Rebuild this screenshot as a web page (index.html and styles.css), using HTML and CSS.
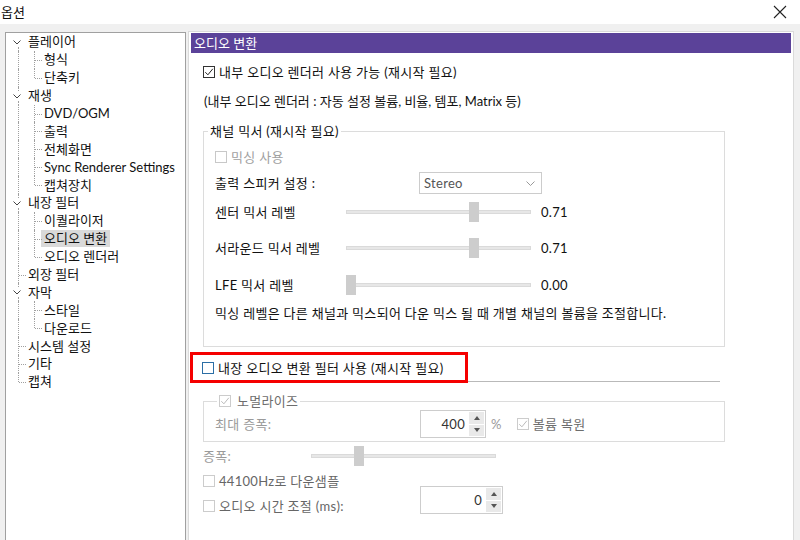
FILE: index.html
```
<!DOCTYPE html>
<html lang="ko">
<head>
<meta charset="utf-8">
<title>옵션</title>
<link rel="stylesheet" href="styles.css">
</head>
<body>

<header class="titlebar">
	<h1>옵션</h1>
	<svg class="close" width="14" height="14" viewBox="0 0 14 14"><path d="M1 1 13 13M13 1 1 13" stroke="#222" stroke-width="1.1" fill="none"/></svg>
</header>

<div class="main">

	<!-- left tree -->
	<nav class="tree">
		<div class="node"><span class="g e first"><svg width="8" height="5" viewBox="0 0 8 5"><path d="M0.5 0.5 4 4 7.5 0.5" fill="none" stroke="#444"/></svg></span><span class="txt">플레이어</span></div>
		<div class="node"><span class="g v"></span><span class="g t"></span><span class="txt">형식</span></div>
		<div class="node"><span class="g v"></span><span class="g l"></span><span class="txt">단축키</span></div>
		<div class="node"><span class="g e"><svg width="8" height="5" viewBox="0 0 8 5"><path d="M0.5 0.5 4 4 7.5 0.5" fill="none" stroke="#444"/></svg></span><span class="txt">재생</span></div>
		<div class="node"><span class="g v"></span><span class="g t"></span><span class="txt">DVD/OGM</span></div>
		<div class="node"><span class="g v"></span><span class="g t"></span><span class="txt">출력</span></div>
		<div class="node"><span class="g v"></span><span class="g t"></span><span class="txt">전체화면</span></div>
		<div class="node"><span class="g v"></span><span class="g t"></span><span class="txt">Sync Renderer Settings</span></div>
		<div class="node"><span class="g v"></span><span class="g l"></span><span class="txt">캡쳐장치</span></div>
		<div class="node"><span class="g e"><svg width="8" height="5" viewBox="0 0 8 5"><path d="M0.5 0.5 4 4 7.5 0.5" fill="none" stroke="#444"/></svg></span><span class="txt">내장 필터</span></div>
		<div class="node"><span class="g v"></span><span class="g t"></span><span class="txt">이퀄라이저</span></div>
		<div class="node"><span class="g v"></span><span class="g t"></span><span class="txt selected">오디오 변환</span></div>
		<div class="node"><span class="g v"></span><span class="g l"></span><span class="txt">오디오 렌더러</span></div>
		<div class="node"><span class="g t"></span><span class="txt">외장 필터</span></div>
		<div class="node"><span class="g e"><svg width="8" height="5" viewBox="0 0 8 5"><path d="M0.5 0.5 4 4 7.5 0.5" fill="none" stroke="#444"/></svg></span><span class="txt">자막</span></div>
		<div class="node"><span class="g v"></span><span class="g t"></span><span class="txt">스타일</span></div>
		<div class="node"><span class="g v"></span><span class="g l"></span><span class="txt">다운로드</span></div>
		<div class="node"><span class="g t"></span><span class="txt">시스템 설정</span></div>
		<div class="node"><span class="g t"></span><span class="txt">기타</span></div>
		<div class="node"><span class="g l"></span><span class="txt">캡쳐</span></div>
	</nav>

	<!-- settings page -->
	<section class="panel">
		<div class="panel-head">오디오 변환</div>
		<div class="panel-body">

			<div class="check-row"><span class="chk"><svg width="10" height="10" viewBox="0 0 10 10"><path d="M1.3 5.2 3.9 7.8 8.8 1.8" fill="none" stroke="#222"/></svg></span>내부 오디오 렌더러 사용 가능 (재시작 필요)</div>
			<p class="note">(내부 오디오 렌더러 : 자동 설정 볼륨, 비율, 템포, Matrix 등)</p>

			<fieldset class="group mixer">
				<legend>채널 믹서 (재시작 필요)</legend>
				<div class="check-row off mix-use"><span class="chk"></span>믹싱 사용</div>
				<div class="field speaker">
					<span class="lbl">출력 스피커 설정 :</span>
					<div class="combo">Stereo<svg width="9" height="5" viewBox="0 0 9 5"><path d="M0.5 0.5 4.5 4.5 8.5 0.5" fill="none" stroke="#999"/></svg></div>
				</div>
				<div class="field level center">
					<span class="lbl">센터 믹서 레벨</span>
					<div class="slider"><span class="track"></span><span class="thumb" style="left:123px"></span></div>
					<span class="val">0.71</span>
				</div>
				<div class="field level surround">
					<span class="lbl">서라운드 믹서 레벨</span>
					<div class="slider"><span class="track"></span><span class="thumb" style="left:123px"></span></div>
					<span class="val">0.71</span>
				</div>
				<div class="field level lfe">
					<span class="lbl">LFE 믹서 레벨</span>
					<div class="slider"><span class="track"></span><span class="thumb" style="left:0px"></span></div>
					<span class="val">0.00</span>
				</div>
				<p class="hint">믹싱 레벨은 다른 채널과 믹스되어 다운 믹스 될 때 개별 채널의 볼륨을 조절합니다.</p>
			</fieldset>

			<div class="filter-row">
				<div class="mark"><span class="chk focus"></span>내장 오디오 변환 필터 사용 (재시작 필요)</div>
				<span class="sep"></span>
			</div>

			<fieldset class="group norm">
				<legend><span class="chk"><svg width="10" height="10" viewBox="0 0 10 10"><path d="M1.3 5.2 3.9 7.8 8.8 1.8" fill="none" stroke="#bbb"/></svg></span>노멀라이즈</legend>
				<div class="field gain-max">
					<span class="lbl">최대 증폭:</span>
					<div class="spin w66"><span class="num">400</span><span class="btns"><span class="up"></span><span class="dn"></span></span></div>
					<span class="pct">%</span>
					<span class="restore"><span class="chk"><svg width="10" height="10" viewBox="0 0 10 10"><path d="M1.3 5.2 3.9 7.8 8.8 1.8" fill="none" stroke="#bbb"/></svg></span>볼륨 복원</span>
				</div>
			</fieldset>

			<div class="field gain">
				<span class="lbl">증폭:</span>
				<div class="slider"><span class="track"></span><span class="thumb" style="left:43px"></span></div>
			</div>
			<div class="check-row off2 down">
				<span class="chk"></span>44100Hz로 다운샘플
			</div>
			<div class="field delay">
				<span class="lbl"><span class="chk"></span>오디오 시간 조절 (ms):</span>
				<div class="spin w83"><span class="num">0</span><span class="btns"><span class="up"></span><span class="dn"></span></span></div>
			</div>

		</div>
	</section>
</div>

</body>
</html>
```

FILE: styles.css
```
* {
	box-sizing : border-box ;
	}
body {
	margin : 0 ;
	width : 800px ;
	height : 540px ;
	overflow : hidden ;
	background : #f0f0f0 ;
	font-family : Lato, "Noto Sans CJK KR", sans-serif ;
	font-size : 13px ;
	line-height : 18px ;
	color : #111 ;
	}

/* title bar */
.titlebar {
	height : 24px ;
	background : #fff ;
	display : flex ;
	align-items : center ;
	justify-content : space-between ;
	padding : 0 13px 0 1px ;
	}
.titlebar h1 {
	margin : 0 ;
	font-size : 13px ;
	font-weight : normal ;
	}

.main {
	display : flex ;
	gap : 2px ;
	padding : 7px 6px 0 5px ;
	height : 516px ;
	}

/* tree */
.tree {
	width : 181px ;
	margin-top : 1px ;
	background : #fff ;
	border : 1px solid #a0a0a0 ;
	border-bottom : none ;
	padding : 0 0 0 4px ;
	}
.node {
	display : flex ;
	align-items : center ;
	height : 17.9px ;
	}
.g {
	width : 16px ;
	height : 100% ;
	flex : none ;
	position : relative ;
	}
.g.v::before, .g.t::before, .g.l::before, .g.e::before, .g.e::after {
	content : "" ;
	position : absolute ;
	left : 8px ;
	top : 0 ;
	bottom : 0 ;
	border-left : 1px dotted #a0a0a0 ;
	}
.g.l::before {
	bottom : 50% ;
	}
.g.t::after, .g.l::after {
	content : "" ;
	position : absolute ;
	left : 9px ;
	right : 0 ;
	top : 50% ;
	border-top : 1px dotted #a0a0a0 ;
	}
.g.e svg {
	position : absolute ;
	left : 3px ;
	top : 7px ;
	}
.g.e::before {
	bottom : auto ;
	height : 4px ;
	}
.g.e.first::before {
	display : none ;
	}
.g.e::after {
	top : 14px ;
	}
.txt {
	margin-left : -1px ;
	padding : 0 3px ;
	line-height : 17px ;
	white-space : nowrap ;
	}
.node .g.e + .txt {
	margin-left : 0 ;
	padding-left : 2px ;
	}
.txt.selected {
	background : #d9d9d9 ;
	}

/* panel */
.panel {
	flex : 1 ;
	background : #fff ;
	border : 1px solid #dadada ;
	border-bottom : none ;
	padding : 1px 2px ;
	}
.panel-head {
	height : 20px ;
	line-height : 20px ;
	padding-left : 3px ;
	background : #5b4299 ;
	color : #fff ;
	}
.panel-body {
	padding : 10px 0 0 12px ;
	letter-spacing : 0.3px ;
	}

.chk {
	width : 12px ;
	height : 12px ;
	border : 1px solid #333 ;
	background : #fff ;
	flex : none ;
	display : inline-flex ;
	align-items : center ;
	justify-content : center ;
	}
.check-row {
	display : flex ;
	align-items : center ;
	gap : 4px ;
	height : 18px ;
	}
.note {
	margin : 11px 0 0 1px ;
	letter-spacing : 0 ;
	}

/* group boxes */
.group {
	margin : 12px 0 0 0 ;
	width : 522px ;
	border : 1px solid #dcdcdc ;
	padding : 0 11px ;
	}
.group legend {
	padding : 0 2px ;
	}
.mixer legend {
	margin-left : -7px ;
	}
.mixer {
	padding-bottom : 24px ;
	}
.check-row.off {
	color : #a0a0a0 ;
	}
.check-row.off .chk {
	border-color : #c8c8c8 ;
	}
.mix-use {
	margin-top : 8px ;
	}

.field {
	display : flex ;
	align-items : center ;
	}
.lbl {
	flex : none ;
	}
.speaker {
	margin-top : 6px ;
	}
.speaker .lbl {
	width : 204px ;
	}
.combo {
	width : 123px ;
	height : 22px ;
	border : 1px solid #cccccc ;
	display : flex ;
	align-items : center ;
	justify-content : space-between ;
	padding : 0 6px 0 4px ;
	color : #555 ;
	}
.level .lbl {
	width : 131px ;
	}
.center {
	margin-top : 8px ;
	}
.surround {
	margin-top : 16px ;
	}
.lfe {
	margin-top : 17px ;
	}
.slider {
	width : 185px ;
	height : 20px ;
	position : relative ;
	display : flex ;
	align-items : center ;
	}
.track {
	flex : 1 ;
	height : 4px ;
	background : #e7e7e7 ;
	border : 1px solid #dadada ;
	}
.thumb {
	position : absolute ;
	top : 0 ;
	width : 10px ;
	height : 20px ;
	background : #cdcdcd ;
	}
.val {
	margin-left : 10px ;
	}
.hint {
	margin : 9px 0 0 0 ;
	}

/* highlighted checkbox */
.filter-row {
	display : flex ;
	align-items : flex-end ;
	margin : 5px 0 0 -13px ;
	}
.mark {
	display : flex ;
	align-items : center ;
	gap : 4px ;
	height : 31px ;
	width : 278px ;
	border : 3px solid #f50000 ;
	padding-left : 9px ;
	}
.chk.focus {
	border-color : #2b6ea5 ;
	}
.sep {
	width : 252px ;
	border-bottom : 1px solid #b9b9b9 ;
	margin-bottom : 1px ;
	}

/* normalize */
.norm {
	margin-top : 9px ;
	padding-bottom : 3px ;
	}
.norm legend {
	display : flex ;
	align-items : center ;
	gap : 6px ;
	margin-left : 2px ;
	color : #6d6d6d ;
	}
.norm .chk, .gain ~ .check-row .chk, .delay .chk {
	border-color : #cccccc ;
	}
.gain-max .lbl {
	width : 205px ;
	color : #9a9a9a ;
	}
.spin {
	height : 28px ;
	border : 1px solid #cdcdcd ;
	background : #fff ;
	display : flex ;
	padding : 1px ;
	}
.w66 {
	width : 66px ;
	}
.w83 {
	width : 83px ;
	}
.num {
	flex : 1 ;
	text-align : right ;
	padding-right : 4px ;
	line-height : 24px ;
	color : #333 ;
	}
.btns {
	width : 15px ;
	display : flex ;
	flex-direction : column ;
	gap : 1px ;
	}
.btns span {
	flex : 1 ;
	background : #e9e9e9 ;
	display : flex ;
	align-items : center ;
	justify-content : center ;
	}
.btns .up::before, .btns .dn::before {
	content : "" ;
	border : 3px solid transparent ;
	}
.btns .up::before {
	border-bottom : 4px solid #555 ;
	border-top : none ;
	}
.btns .dn::before {
	border-top : 4px solid #555 ;
	border-bottom : none ;
	}
.pct {
	margin-left : 5px ;
	color : #9a9a9a ;
	}
.restore {
	display : flex ;
	align-items : center ;
	gap : 4px ;
	margin-left : 15px ;
	color : #6d6d6d ;
	}

.gain {
	margin : 4px 0 0 0 ;
	}
.gain .lbl {
	width : 108px ;
	color : #9a9a9a ;
	}
.check-row.off2 {
	color : #666 ;
	margin-top : 6px ;
	}
.delay {
	align-items : flex-start ;
	}
.delay .lbl {
	width : 217px ;
	display : flex ;
	align-items : center ;
	gap : 4px ;
	height : 18px ;
	margin-top : 7px ;
	color : #666 ;
	}
.delay .spin {
	margin-top : -4px ;
	}
```
